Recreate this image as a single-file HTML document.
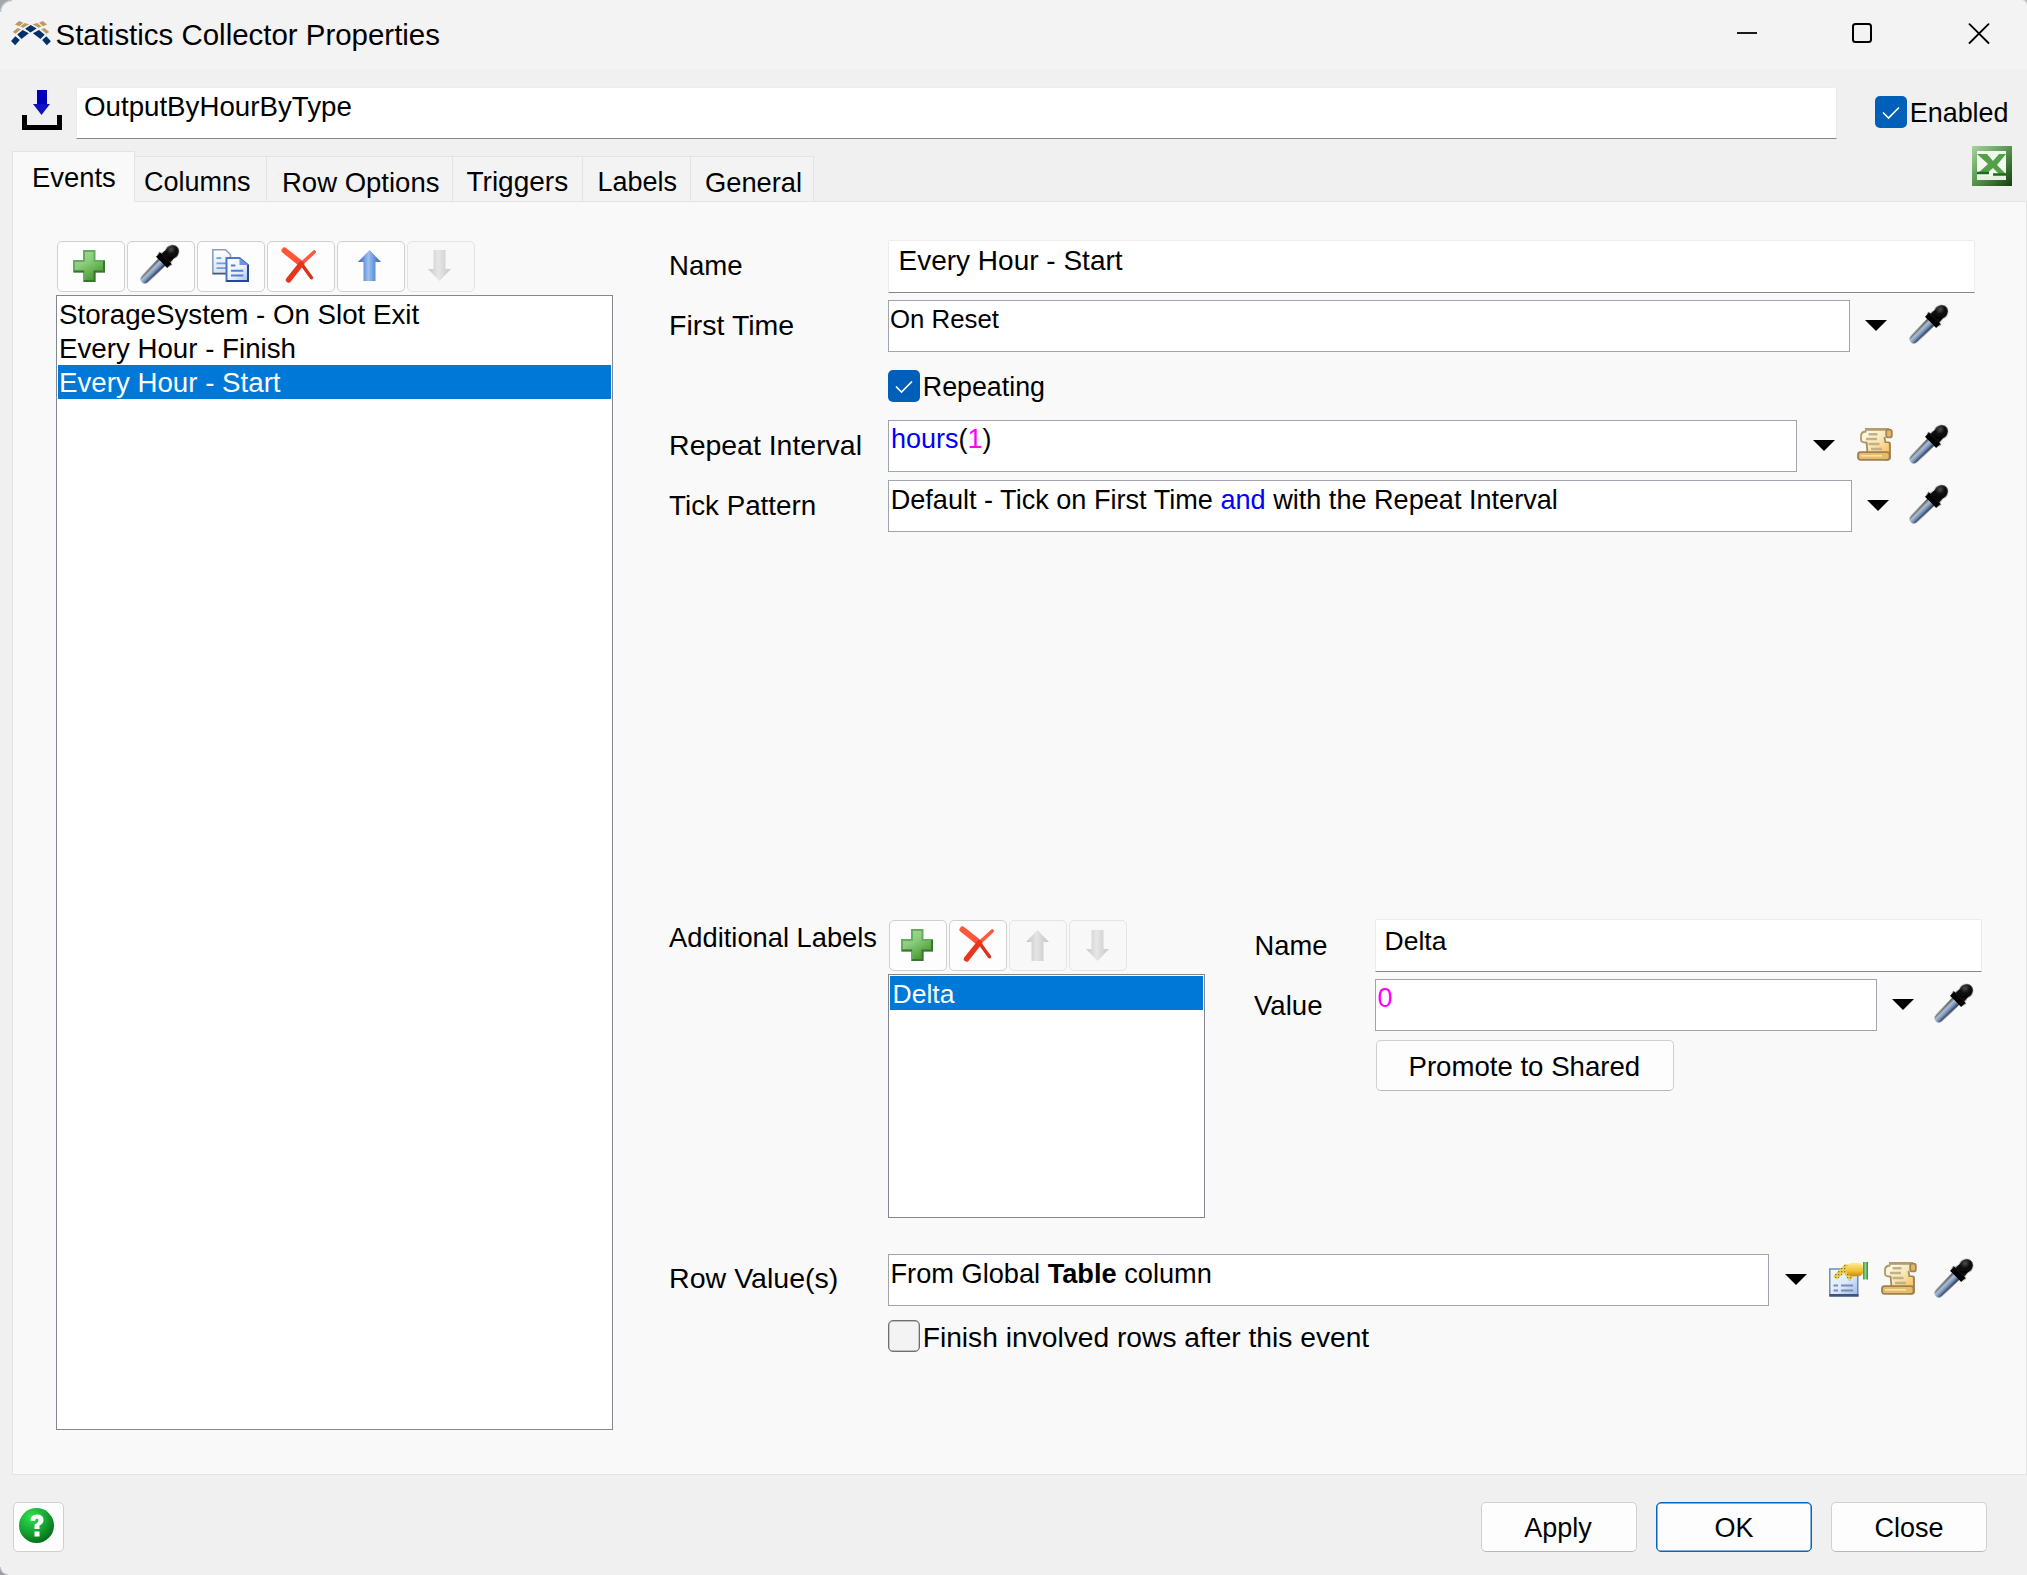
<!DOCTYPE html>
<html><head><meta charset="utf-8"><title>Statistics Collector Properties</title>
<style>
html,body{margin:0;padding:0;}
body{width:2027px;height:1575px;position:relative;overflow:hidden;background:#f0f0f0;font-family:"Liberation Sans", sans-serif;}
</style></head><body>
<div style="position:absolute;left:0px;top:0px;width:2027px;height:69px;background:#f3f3f3"></div>
<div style="position:absolute;left:0;top:0;width:12px;height:12px;background:radial-gradient(circle at 12px 12px, rgba(0,0,0,0) 10px, #a4a8ac 12.5px)"></div>
<div style="position:absolute;left:0;top:1567px;width:8px;height:8px;background:radial-gradient(circle at 8px 0px, rgba(0,0,0,0) 6.5px, #9a9ea2 8.5px)"></div>
<div style="position:absolute;left:2021px;top:0;width:6px;height:6px;background:radial-gradient(circle at 0px 6px, rgba(0,0,0,0) 5.5px, #c0c0c0 7px)"></div>
<svg style="position:absolute;left:8px;top:16px" width="48" height="34" viewBox="0 0 48 34"><defs><filter id="lb" x="-10%" y="-10%" width="120%" height="120%"><feGaussianBlur stdDeviation="0.45"/></filter></defs><g filter="url(#lb)"><polygon points="17.05,12.79 22.73,9.00 28.65,12.55 22.50,16.58" fill="#04306a"/><polygon points="9.24,18.47 14.68,13.97 20.84,17.29 13.50,22.97" fill="#04306a"/><polygon points="3.08,25.10 7.34,20.13 11.84,23.92 7.10,29.36" fill="#04306a"/><polygon points="24.86,17.29 31.02,13.97 36.70,18.71 32.44,22.97" fill="#04306a"/><polygon points="34.10,23.92 38.36,20.13 42.86,25.34 38.83,29.36" fill="#04306a"/><polygon points="6.87,8.52 11.13,4.97 15.39,6.87 11.37,10.18" fill="#bd9a64"/><polygon points="12.31,10.42 16.58,7.10 21.08,8.29 15.39,11.84" fill="#bd9a64"/><polygon points="4.74,16.10 9.47,12.08 13.02,13.26 7.58,17.76" fill="#bd9a64"/><polygon points="31.02,6.87 34.81,4.97 39.07,8.52 35.05,10.18" fill="#bd9a64"/><polygon points="24.63,8.29 29.36,7.10 33.63,10.42 30.55,11.84" fill="#bd9a64"/><polygon points="33.15,13.26 36.47,12.08 41.20,16.10 38.36,17.76" fill="#bd9a64"/></g></svg>
<div style="position:absolute;left:55.50px;top:19.66px;font-size:29.45px;line-height:29.45px;color:#000;white-space:nowrap;">Statistics Collector Properties</div>
<div style="position:absolute;left:1737px;top:32px;width:20px;height:2px;background:#1a1a1a"></div>
<svg style="position:absolute;left:1850px;top:21px" width="24" height="24" viewBox="0 0 24 24"><rect x="3" y="3" width="18" height="18" rx="2.5" fill="none" stroke="#000" stroke-width="2"/></svg>
<svg style="position:absolute;left:1968px;top:23px" width="22" height="21" viewBox="0 0 22 21"><path d="M1.5,1.2 L20.5,20 M20.5,1.2 L1.5,20" stroke="#000" stroke-width="1.8" stroke-linecap="round"/></svg>
<div style="position:absolute;left:37px;top:90px;width:10px;height:16px;background:#0000b8"></div>
<svg style="position:absolute;left:33px;top:104px" width="17" height="12" viewBox="0 0 17 12"><path d="M0,0 H17 L8.5,11 Z" fill="#1010c0"/></svg>
<div style="position:absolute;left:22px;top:115px;width:40px;height:15px;background:#000"></div>
<div style="position:absolute;left:27px;top:115px;width:30px;height:10px;background:#f0f0f0"></div>
<div style="position:absolute;left:76px;top:87px;width:1759px;height:50px;background:#fff;border:1px solid #ececec;border-bottom:1px solid #868686;border-radius:2px 2px 0 0"></div>
<div style="position:absolute;left:84.00px;top:92.85px;font-size:27.7px;line-height:27.7px;color:#000;white-space:nowrap;">OutputByHourByType</div>
<div style="position:absolute;left:1875px;top:96px;width:32px;height:32px;background:#005fb8;border-radius:5px"></div>
<svg style="position:absolute;left:1875px;top:96px" width="32" height="32" viewBox="0 0 32 32"><path d="M8,16.5 L13.5,22 L24,11.5" stroke="#fff" stroke-width="1.6" fill="none"/></svg>
<div style="position:absolute;left:1909.80px;top:99.92px;font-size:26.9px;line-height:26.9px;color:#000;white-space:nowrap;">Enabled</div>
<svg style="position:absolute;left:1972px;top:146px" width="40" height="40" viewBox="0 0 40 40"><defs><linearGradient id="exg" x1="0" y1="0" x2="1" y2="1"><stop offset="0" stop-color="#a8d4a0"/><stop offset="0.45" stop-color="#5c9c54"/><stop offset="1" stop-color="#173e12"/></linearGradient>
<filter id="xf" x="-10%" y="-10%" width="120%" height="120%"><feGaussianBlur stdDeviation="0.55"/></filter></defs>
<rect x="0" y="0" width="40" height="40" fill="url(#exg)"/>
<g filter="url(#xf)">
<rect x="5" y="5" width="29" height="29" fill="#f2f8f0"/>
<path d="M5,8 H15 L21,15 L27,8 H34 L25,19 L34,28 H27 L21,22 L14,28 H5 L16,18 Z" fill="#52a048"/>
<path d="M5,27 H17 M21,28.5 H34" stroke="#1f6a1c" stroke-width="2.4"/>
<rect x="5" y="30" width="29" height="4" fill="#e4f0e2"/>
</g></svg>
<div style="position:absolute;left:12px;top:201px;width:2015px;height:1274px;background:#f9f9f9;border:1px solid #e3e3e3;box-sizing:border-box"></div>
<div style="position:absolute;left:135px;top:156px;width:131px;height:44px;background:#f3f3f3;border:1px solid #e3e3e3;border-left:none;border-bottom:none"></div>
<div style="position:absolute;left:144.00px;top:169.14px;font-size:27px;line-height:27px;color:#000;white-space:nowrap;">Columns</div>
<div style="position:absolute;left:267px;top:156px;width:185px;height:44px;background:#f3f3f3;border:1px solid #e3e3e3;border-left:none;border-bottom:none"></div>
<div style="position:absolute;left:282.00px;top:168.72px;font-size:27.5px;line-height:27.5px;color:#000;white-space:nowrap;">Row Options</div>
<div style="position:absolute;left:453px;top:156px;width:129px;height:44px;background:#f3f3f3;border:1px solid #e3e3e3;border-left:none;border-bottom:none"></div>
<div style="position:absolute;left:466.50px;top:168.29px;font-size:28px;line-height:28px;color:#000;white-space:nowrap;">Triggers</div>
<div style="position:absolute;left:583px;top:156px;width:107px;height:44px;background:#f3f3f3;border:1px solid #e3e3e3;border-left:none;border-bottom:none"></div>
<div style="position:absolute;left:597.50px;top:169.14px;font-size:27px;line-height:27px;color:#000;white-space:nowrap;">Labels</div>
<div style="position:absolute;left:691px;top:156px;width:122px;height:44px;background:#f3f3f3;border:1px solid #e3e3e3;border-left:none;border-bottom:none"></div>
<div style="position:absolute;left:705.00px;top:168.89px;font-size:27.3px;line-height:27.3px;color:#000;white-space:nowrap;">General</div>
<div style="position:absolute;left:12px;top:151px;width:121px;height:50px;background:#f9f9f9;border:1px solid #e3e3e3;border-bottom:none"></div>
<div style="position:absolute;left:13px;top:200px;width:120px;height:3px;background:#f9f9f9"></div>
<div style="position:absolute;left:32.00px;top:163.80px;font-size:27.4px;line-height:27.4px;color:#000;white-space:nowrap;">Events</div>
<div style="position:absolute;left:57px;top:241px;width:66px;height:49px;background:#fdfdfd;border:1px solid #d0d0d0;border-radius:5px"></div>
<div style="position:absolute;left:127px;top:241px;width:66px;height:49px;background:#fdfdfd;border:1px solid #d0d0d0;border-radius:5px"></div>
<div style="position:absolute;left:197px;top:241px;width:66px;height:49px;background:#fdfdfd;border:1px solid #d0d0d0;border-radius:5px"></div>
<div style="position:absolute;left:267px;top:241px;width:66px;height:49px;background:#fdfdfd;border:1px solid #d0d0d0;border-radius:5px"></div>
<div style="position:absolute;left:337px;top:241px;width:66px;height:49px;background:#fdfdfd;border:1px solid #d0d0d0;border-radius:5px"></div>
<div style="position:absolute;left:407px;top:241px;width:66px;height:49px;background:#f8f8f8;border:1px solid #e4e4e4;border-radius:5px"></div>
<svg style="position:absolute;left:73px;top:250px" width="32" height="32" viewBox="0 0 32 32"><defs><linearGradient id="plg" x1="0" y1="0" x2="0.6" y2="1"><stop offset="0" stop-color="#a8dc98"/><stop offset="0.45" stop-color="#8ccc7c"/><stop offset="1" stop-color="#46982c"/></linearGradient>
<filter id="pb" x="-10%" y="-10%" width="120%" height="120%"><feGaussianBlur stdDeviation="0.6"/></filter></defs>
<g filter="url(#pb)">
<path d="M11,1 H21.5 V11 H31 V21.5 H21.5 V31 H11 V21.5 H1 V11 H11 Z" fill="url(#plg)" stroke="#64ae5c" stroke-width="2"/>
<path d="M31,11 V21.5 H21.5 V31 H11 M1,21.5 H11" fill="none" stroke="#2f6a2a" stroke-width="2" opacity="0.85"/>
</g></svg>
<svg style="position:absolute;left:137px;top:242px" width="45" height="45" viewBox="0 0 45 45"><defs><linearGradient id="tubeg" x1="0" x2="1" y1="0" y2="0">
<stop offset="0" stop-color="#30343a"/><stop offset="0.32" stop-color="#b4c0cc"/><stop offset="0.62" stop-color="#7494c4"/><stop offset="1" stop-color="#202428"/></linearGradient>
<radialGradient id="bulbg" cx="0.3" cy="0.4" r="0.75"><stop offset="0" stop-color="#505050"/><stop offset="0.45" stop-color="#101010"/><stop offset="1" stop-color="#000"/></radialGradient>
<filter id="eb" x="-20%" y="-20%" width="140%" height="140%"><feGaussianBlur stdDeviation="0.65"/></filter></defs>
<g transform="translate(22.5,22.5) rotate(45)" filter="url(#eb)">
<path d="M-5,-4 L5,-4 L4.2,20.5 Q4,25 0,25 Q-4,25 -4.2,20.5 Z" fill="url(#tubeg)"/>
<path d="M-8.6,-9 L8.6,-9 L7.8,-3 L-7.8,-3 Z" fill="#060606"/>
<path d="M-6,-14 L6,-14 L6.5,-8 L-6.5,-8 Z" fill="#0a0a0a"/>
<ellipse cx="0" cy="-17.5" rx="6.6" ry="7.4" fill="url(#bulbg)"/>
</g></svg>
<svg style="position:absolute;left:200px;top:242px" width="60" height="48" viewBox="0 0 60 48"><defs><linearGradient id="cpg1" x1="0" y1="0" x2="0" y2="1"><stop offset="0" stop-color="#ffffff"/><stop offset="1" stop-color="#d8e2f0"/></linearGradient>
<linearGradient id="cpg2" x1="0" y1="0" x2="1" y2="1"><stop offset="0" stop-color="#ffffff"/><stop offset="0.6" stop-color="#e8eef8"/><stop offset="1" stop-color="#a8bce0"/></linearGradient>
<filter id="cb" x="-10%" y="-10%" width="120%" height="120%"><feGaussianBlur stdDeviation="0.6"/></filter></defs>
<g filter="url(#cb)">
<path d="M12.8,7.8 H25.5 L30.5,12.8 V31.8 H12.8 Z" fill="url(#cpg1)" stroke="#8aa0bc" stroke-width="1.6"/>
<path d="M12.8,31.5 H30" stroke="#4a5a70" stroke-width="1.6"/>
<path d="M16.5,16.2 H21.3 M16.5,21.3 H26 M16.5,26.2 H26" stroke="#6a9ee6" stroke-width="1.8"/>
<path d="M26.5,16 H39.5 L48,23 V39 H26.5 Z" fill="url(#cpg2)" stroke="#4a74cc" stroke-width="2"/>
<path d="M26.5,39 H48 V23" fill="none" stroke="#26479c" stroke-width="2"/>
<path d="M39.5,16 V23 H48 Z" fill="#6e94e0"/>
<path d="M31,23.5 H35.4 M31,28.7 H43.3 M31,33.5 H43.3" stroke="#4a80d8" stroke-width="2"/>
</g></svg>
<svg style="position:absolute;left:280px;top:245px" width="38" height="38" viewBox="0 0 38 38"><defs><filter id="xb" x="-20%" y="-20%" width="140%" height="140%"><feGaussianBlur stdDeviation="0.5"/></filter></defs>
<g filter="url(#xb)" stroke-linecap="round" fill="none">
<path d="M4.5,5.5 L21.3,18.8" stroke="#ff5538" stroke-width="6"/>
<path d="M21.3,18.8 L31.5,32.8" stroke="#d8301a" stroke-width="3.4"/>
<path d="M34.2,7.0 L21.3,18.8" stroke="#ff5a40" stroke-width="3.6"/>
<path d="M21.3,18.8 L8.5,35.0" stroke="#e8361c" stroke-width="5.4"/>
</g></svg>
<svg style="position:absolute;left:358px;top:250px" width="23" height="31" viewBox="0 0 23 31"><defs><linearGradient id="ua0" x1="0" x2="1"><stop offset="0" stop-color="#2d5fc0"/><stop offset="0.45" stop-color="#9cc0f0"/><stop offset="1" stop-color="#2d5fc0"/></linearGradient></defs>
<path d="M11.5,0 L23,12 L17.5,12 L17.5,31 L5.5,31 L5.5,12 L0,12 Z" fill="url(#ua0)"/></svg>
<svg style="position:absolute;left:428px;top:250px" width="23" height="31" viewBox="0 0 23 31"><defs><linearGradient id="da1" x1="0" x2="1"><stop offset="0" stop-color="#c8c8c8"/><stop offset="0.45" stop-color="#e6e6e6"/><stop offset="1" stop-color="#c8c8c8"/></linearGradient></defs>
<path d="M5.5,0 L17.5,0 L17.5,19 L23,19 L11.5,31 L0,19 L5.5,19 Z" fill="url(#da1)"/></svg>
<div style="position:absolute;left:56px;top:295px;width:557px;height:1135px;background:#fff;border:1px solid #828790;box-sizing:border-box"></div>
<div style="position:absolute;left:58px;top:365px;width:553px;height:34px;background:#0078d7"></div>
<div style="position:absolute;left:59.00px;top:301.25px;font-size:27.7px;line-height:27.7px;color:#000;white-space:nowrap;">StorageSystem - On Slot Exit</div>
<div style="position:absolute;left:59.00px;top:334.95px;font-size:27.7px;line-height:27.7px;color:#000;white-space:nowrap;">Every Hour - Finish</div>
<div style="position:absolute;left:59.00px;top:369.25px;font-size:27.7px;line-height:27.7px;color:#fff;white-space:nowrap;">Every Hour - Start</div>
<div style="position:absolute;left:669.10px;top:252.13px;font-size:27.6px;line-height:27.6px;color:#000;white-space:nowrap;">Name</div>
<div style="position:absolute;left:669.10px;top:310.57px;font-size:28.5px;line-height:28.5px;color:#000;white-space:nowrap;">First Time</div>
<div style="position:absolute;left:669.10px;top:430.91px;font-size:28.45px;line-height:28.45px;color:#000;white-space:nowrap;">Repeat Interval</div>
<div style="position:absolute;left:669.10px;top:491.50px;font-size:27.75px;line-height:27.75px;color:#000;white-space:nowrap;">Tick Pattern</div>
<div style="position:absolute;left:669.10px;top:923.89px;font-size:27.3px;line-height:27.3px;color:#000;white-space:nowrap;">Additional Labels</div>
<div style="position:absolute;left:669.10px;top:1264.33px;font-size:28.55px;line-height:28.55px;color:#000;white-space:nowrap;">Row Value(s)</div>
<div style="position:absolute;left:888px;top:240px;width:1085px;height:51px;background:#fff;border:1px solid #ececec;border-bottom:1px solid #868686;border-radius:2px 2px 0 0"></div>
<div style="position:absolute;left:898.50px;top:247.29px;font-size:28px;line-height:28px;color:#000;white-space:nowrap;">Every Hour - Start</div>
<div style="position:absolute;left:888px;top:300px;width:960px;height:50px;background:#fff;border:1px solid #a0a4ac"></div>
<div style="position:absolute;left:890.00px;top:307.16px;font-size:25.8px;line-height:25.8px;color:#000;white-space:nowrap;">On Reset</div>
<svg style="position:absolute;left:1865px;top:320px" width="22" height="11" viewBox="0 0 22 11"><path d="M0,0 L22,0 L11.0,11 Z" fill="#000"/></svg>
<svg style="position:absolute;left:1906px;top:302px" width="45" height="45" viewBox="0 0 45 45"><defs><linearGradient id="tubeg" x1="0" x2="1" y1="0" y2="0">
<stop offset="0" stop-color="#30343a"/><stop offset="0.32" stop-color="#b4c0cc"/><stop offset="0.62" stop-color="#7494c4"/><stop offset="1" stop-color="#202428"/></linearGradient>
<radialGradient id="bulbg" cx="0.3" cy="0.4" r="0.75"><stop offset="0" stop-color="#505050"/><stop offset="0.45" stop-color="#101010"/><stop offset="1" stop-color="#000"/></radialGradient>
<filter id="eb" x="-20%" y="-20%" width="140%" height="140%"><feGaussianBlur stdDeviation="0.65"/></filter></defs>
<g transform="translate(22.5,22.5) rotate(45)" filter="url(#eb)">
<path d="M-5,-4 L5,-4 L4.2,20.5 Q4,25 0,25 Q-4,25 -4.2,20.5 Z" fill="url(#tubeg)"/>
<path d="M-8.6,-9 L8.6,-9 L7.8,-3 L-7.8,-3 Z" fill="#060606"/>
<path d="M-6,-14 L6,-14 L6.5,-8 L-6.5,-8 Z" fill="#0a0a0a"/>
<ellipse cx="0" cy="-17.5" rx="6.6" ry="7.4" fill="url(#bulbg)"/>
</g></svg>
<div style="position:absolute;left:888px;top:370px;width:32px;height:32px;background:#005fb8;border-radius:5px"></div>
<svg style="position:absolute;left:888px;top:370px" width="32" height="32" viewBox="0 0 32 32"><path d="M8,16.5 L13.5,22 L24,11.5" stroke="#fff" stroke-width="1.6" fill="none"/></svg>
<div style="position:absolute;left:922.80px;top:374.31px;font-size:26.8px;line-height:26.8px;color:#000;white-space:nowrap;">Repeating</div>
<div style="position:absolute;left:888px;top:420px;width:907px;height:50px;background:#fff;border:1px solid #a0a4ac"></div>
<div style="position:absolute;left:891.00px;top:425.84px;font-size:27px;line-height:27px;color:#000;white-space:nowrap;"><span style="color:#0000ff">hours</span>(<span style="color:#ff00ff">1</span>)</div>
<svg style="position:absolute;left:1813px;top:440px" width="22" height="11" viewBox="0 0 22 11"><path d="M0,0 L22,0 L11.0,11 Z" fill="#000"/></svg>
<svg style="position:absolute;left:1855px;top:424px" width="41" height="40" viewBox="0 0 41 40"><defs><linearGradient id="scg" x1="0" y1="0" x2="1" y2="1"><stop offset="0" stop-color="#fffef6"/><stop offset="0.5" stop-color="#f6e8bc"/><stop offset="1" stop-color="#f8c060"/></linearGradient>
<filter id="sb" x="-10%" y="-10%" width="120%" height="120%"><feGaussianBlur stdDeviation="0.6"/></filter></defs>
<g filter="url(#sb)" transform="translate(3,3)">
<rect x="26.5" y="15.5" width="5.5" height="17" rx="1.5" fill="#eebc60" stroke="#9c8050" stroke-width="1.8"/>
<path d="M6,4 H27.5 V10 H26.5 L27.5,16 H30.5 V26 H9.5 L8.5,15 H4 V5 Z" fill="url(#scg)"/>
<path d="M7,2.4 H31" stroke="#b69c6a" stroke-width="2.8"/>
<rect x="28.2" y="2.6" width="5.6" height="7.8" rx="2" fill="#e2b868" stroke="#a48656" stroke-width="1.8"/>
<path d="M8.5,4.5 Q3,4.5 3,9 L3,13 Q3,15.5 8.5,15.5" fill="#faf4dc" stroke="#b09868" stroke-width="1.8"/>
<path d="M26.5,10 L27.5,16 M9.5,26 L8.5,15" stroke="#a88a58" stroke-width="1.8" fill="none"/>
<path d="M10.5,7.3 H19.5 M8,12 H19 M10.5,17 H21.5 M13,22 H24" stroke="#c4b080" stroke-width="2.4"/>
<rect x="0" y="25.2" width="31.5" height="7.6" rx="2.5" fill="#e6bc6c" stroke="#a08050" stroke-width="1.8"/>
<path d="M3,28.8 H24" stroke="#f8e4a8" stroke-width="1.6"/>
</g></svg>
<svg style="position:absolute;left:1906px;top:422px" width="45" height="45" viewBox="0 0 45 45"><defs><linearGradient id="tubeg" x1="0" x2="1" y1="0" y2="0">
<stop offset="0" stop-color="#30343a"/><stop offset="0.32" stop-color="#b4c0cc"/><stop offset="0.62" stop-color="#7494c4"/><stop offset="1" stop-color="#202428"/></linearGradient>
<radialGradient id="bulbg" cx="0.3" cy="0.4" r="0.75"><stop offset="0" stop-color="#505050"/><stop offset="0.45" stop-color="#101010"/><stop offset="1" stop-color="#000"/></radialGradient>
<filter id="eb" x="-20%" y="-20%" width="140%" height="140%"><feGaussianBlur stdDeviation="0.65"/></filter></defs>
<g transform="translate(22.5,22.5) rotate(45)" filter="url(#eb)">
<path d="M-5,-4 L5,-4 L4.2,20.5 Q4,25 0,25 Q-4,25 -4.2,20.5 Z" fill="url(#tubeg)"/>
<path d="M-8.6,-9 L8.6,-9 L7.8,-3 L-7.8,-3 Z" fill="#060606"/>
<path d="M-6,-14 L6,-14 L6.5,-8 L-6.5,-8 Z" fill="#0a0a0a"/>
<ellipse cx="0" cy="-17.5" rx="6.6" ry="7.4" fill="url(#bulbg)"/>
</g></svg>
<div style="position:absolute;left:888px;top:480px;width:962px;height:50px;background:#fff;border:1px solid #a0a4ac"></div>
<div style="position:absolute;left:890.70px;top:486.05px;font-size:27.1px;line-height:27.1px;color:#000;white-space:nowrap;">Default - Tick on First Time <span style="color:#0000ff">and</span> with the Repeat Interval</div>
<svg style="position:absolute;left:1867px;top:500px" width="22" height="11" viewBox="0 0 22 11"><path d="M0,0 L22,0 L11.0,11 Z" fill="#000"/></svg>
<svg style="position:absolute;left:1906px;top:482px" width="45" height="45" viewBox="0 0 45 45"><defs><linearGradient id="tubeg" x1="0" x2="1" y1="0" y2="0">
<stop offset="0" stop-color="#30343a"/><stop offset="0.32" stop-color="#b4c0cc"/><stop offset="0.62" stop-color="#7494c4"/><stop offset="1" stop-color="#202428"/></linearGradient>
<radialGradient id="bulbg" cx="0.3" cy="0.4" r="0.75"><stop offset="0" stop-color="#505050"/><stop offset="0.45" stop-color="#101010"/><stop offset="1" stop-color="#000"/></radialGradient>
<filter id="eb" x="-20%" y="-20%" width="140%" height="140%"><feGaussianBlur stdDeviation="0.65"/></filter></defs>
<g transform="translate(22.5,22.5) rotate(45)" filter="url(#eb)">
<path d="M-5,-4 L5,-4 L4.2,20.5 Q4,25 0,25 Q-4,25 -4.2,20.5 Z" fill="url(#tubeg)"/>
<path d="M-8.6,-9 L8.6,-9 L7.8,-3 L-7.8,-3 Z" fill="#060606"/>
<path d="M-6,-14 L6,-14 L6.5,-8 L-6.5,-8 Z" fill="#0a0a0a"/>
<ellipse cx="0" cy="-17.5" rx="6.6" ry="7.4" fill="url(#bulbg)"/>
</g></svg>
<div style="position:absolute;left:889px;top:920px;width:56px;height:49px;background:#fdfdfd;border:1px solid #d0d0d0;border-radius:5px"></div>
<div style="position:absolute;left:949px;top:920px;width:56px;height:49px;background:#fdfdfd;border:1px solid #d0d0d0;border-radius:5px"></div>
<div style="position:absolute;left:1009px;top:920px;width:56px;height:49px;background:#f8f8f8;border:1px solid #e4e4e4;border-radius:5px"></div>
<div style="position:absolute;left:1069px;top:920px;width:56px;height:49px;background:#f8f8f8;border:1px solid #e4e4e4;border-radius:5px"></div>
<svg style="position:absolute;left:901px;top:929px" width="32" height="32" viewBox="0 0 32 32"><defs><linearGradient id="plg" x1="0" y1="0" x2="0.6" y2="1"><stop offset="0" stop-color="#a8dc98"/><stop offset="0.45" stop-color="#8ccc7c"/><stop offset="1" stop-color="#46982c"/></linearGradient>
<filter id="pb" x="-10%" y="-10%" width="120%" height="120%"><feGaussianBlur stdDeviation="0.6"/></filter></defs>
<g filter="url(#pb)">
<path d="M11,1 H21.5 V11 H31 V21.5 H21.5 V31 H11 V21.5 H1 V11 H11 Z" fill="url(#plg)" stroke="#64ae5c" stroke-width="2"/>
<path d="M31,11 V21.5 H21.5 V31 H11 M1,21.5 H11" fill="none" stroke="#2f6a2a" stroke-width="2" opacity="0.85"/>
</g></svg>
<svg style="position:absolute;left:958px;top:924px" width="38" height="38" viewBox="0 0 38 38"><defs><filter id="xb" x="-20%" y="-20%" width="140%" height="140%"><feGaussianBlur stdDeviation="0.5"/></filter></defs>
<g filter="url(#xb)" stroke-linecap="round" fill="none">
<path d="M4.5,5.5 L21.3,18.8" stroke="#ff5538" stroke-width="6"/>
<path d="M21.3,18.8 L31.5,32.8" stroke="#d8301a" stroke-width="3.4"/>
<path d="M34.2,7.0 L21.3,18.8" stroke="#ff5a40" stroke-width="3.6"/>
<path d="M21.3,18.8 L8.5,35.0" stroke="#e8361c" stroke-width="5.4"/>
</g></svg>
<svg style="position:absolute;left:1026px;top:930px" width="23" height="31" viewBox="0 0 23 31"><defs><linearGradient id="ua1" x1="0" x2="1"><stop offset="0" stop-color="#c4c4c4"/><stop offset="0.45" stop-color="#e4e4e4"/><stop offset="1" stop-color="#c4c4c4"/></linearGradient></defs>
<path d="M11.5,0 L23,12 L17.5,12 L17.5,31 L5.5,31 L5.5,12 L0,12 Z" fill="url(#ua1)"/></svg>
<svg style="position:absolute;left:1086px;top:930px" width="23" height="31" viewBox="0 0 23 31"><defs><linearGradient id="da1" x1="0" x2="1"><stop offset="0" stop-color="#c8c8c8"/><stop offset="0.45" stop-color="#e6e6e6"/><stop offset="1" stop-color="#c8c8c8"/></linearGradient></defs>
<path d="M5.5,0 L17.5,0 L17.5,19 L23,19 L11.5,31 L0,19 L5.5,19 Z" fill="url(#da1)"/></svg>
<div style="position:absolute;left:888px;top:974px;width:317px;height:244px;background:#fff;border:1px solid #828790;box-sizing:border-box"></div>
<div style="position:absolute;left:890px;top:976px;width:313px;height:34px;background:#0078d7"></div>
<div style="position:absolute;left:892.50px;top:981.06px;font-size:26.5px;line-height:26.5px;color:#fff;white-space:nowrap;">Delta</div>
<div style="position:absolute;left:1254.50px;top:931.89px;font-size:27.3px;line-height:27.3px;color:#000;white-space:nowrap;">Name</div>
<div style="position:absolute;left:1254.00px;top:991.63px;font-size:27.6px;line-height:27.6px;color:#000;white-space:nowrap;">Value</div>
<div style="position:absolute;left:1375px;top:919px;width:605px;height:51px;background:#fff;border:1px solid #ececec;border-bottom:1px solid #868686;border-radius:2px 2px 0 0"></div>
<div style="position:absolute;left:1384.50px;top:927.56px;font-size:26.5px;line-height:26.5px;color:#000;white-space:nowrap;">Delta</div>
<div style="position:absolute;left:1375px;top:979px;width:500px;height:50px;background:#fff;border:1px solid #a0a4ac"></div>
<div style="position:absolute;left:1377.50px;top:985.14px;font-size:27px;line-height:27px;color:#ff00ff;white-space:nowrap;">0</div>
<svg style="position:absolute;left:1892px;top:999px" width="22" height="11" viewBox="0 0 22 11"><path d="M0,0 L22,0 L11.0,11 Z" fill="#000"/></svg>
<svg style="position:absolute;left:1931px;top:981px" width="45" height="45" viewBox="0 0 45 45"><defs><linearGradient id="tubeg" x1="0" x2="1" y1="0" y2="0">
<stop offset="0" stop-color="#30343a"/><stop offset="0.32" stop-color="#b4c0cc"/><stop offset="0.62" stop-color="#7494c4"/><stop offset="1" stop-color="#202428"/></linearGradient>
<radialGradient id="bulbg" cx="0.3" cy="0.4" r="0.75"><stop offset="0" stop-color="#505050"/><stop offset="0.45" stop-color="#101010"/><stop offset="1" stop-color="#000"/></radialGradient>
<filter id="eb" x="-20%" y="-20%" width="140%" height="140%"><feGaussianBlur stdDeviation="0.65"/></filter></defs>
<g transform="translate(22.5,22.5) rotate(45)" filter="url(#eb)">
<path d="M-5,-4 L5,-4 L4.2,20.5 Q4,25 0,25 Q-4,25 -4.2,20.5 Z" fill="url(#tubeg)"/>
<path d="M-8.6,-9 L8.6,-9 L7.8,-3 L-7.8,-3 Z" fill="#060606"/>
<path d="M-6,-14 L6,-14 L6.5,-8 L-6.5,-8 Z" fill="#0a0a0a"/>
<ellipse cx="0" cy="-17.5" rx="6.6" ry="7.4" fill="url(#bulbg)"/>
</g></svg>
<div style="position:absolute;left:1376px;top:1040px;width:296px;height:49px;background:#fdfdfd;border:1px solid #d0d0d0;border-bottom-color:#b8b8b8;border-radius:5px"></div>
<div style="position:absolute;left:1408.50px;top:1052.63px;font-size:27.6px;line-height:27.6px;color:#000;white-space:nowrap;">Promote to Shared</div>
<div style="position:absolute;left:888px;top:1254px;width:879px;height:50px;background:#fff;border:1px solid #a0a4ac"></div>
<div style="position:absolute;left:890.50px;top:1259.97px;font-size:27.2px;line-height:27.2px;color:#000;white-space:nowrap;">From Global <b>Table</b> column</div>
<svg style="position:absolute;left:1785px;top:1274px" width="22" height="11" viewBox="0 0 22 11"><path d="M0,0 L22,0 L11.0,11 Z" fill="#000"/></svg>
<svg style="position:absolute;left:1829px;top:1262px" width="40" height="35" viewBox="0 0 40 35"><defs><linearGradient id="tbg" x1="0" y1="0" x2="1" y2="1"><stop offset="0" stop-color="#f4fbfe"/><stop offset="0.55" stop-color="#dce8fa"/><stop offset="1" stop-color="#98b4ec"/></linearGradient>
<linearGradient id="ylg" x1="0" y1="0" x2="0" y2="1"><stop offset="0" stop-color="#fcec98"/><stop offset="0.6" stop-color="#f0c030"/><stop offset="1" stop-color="#c88a10"/></linearGradient>
<linearGradient id="gng" x1="0" y1="0" x2="1" y2="0"><stop offset="0" stop-color="#3a9a3a"/><stop offset="0.5" stop-color="#8ad08a"/><stop offset="1" stop-color="#2a8a2a"/></linearGradient>
<pattern id="chk" width="3" height="3" patternUnits="userSpaceOnUse"><rect width="3" height="3" fill="#ecd050"/><rect width="1.3" height="1.3" fill="#8a7030"/></pattern>
<filter id="tb" x="-10%" y="-10%" width="120%" height="120%"><feGaussianBlur stdDeviation="0.45"/></filter></defs>
<g filter="url(#tb)">
<rect x="0.8" y="7" width="28" height="27" fill="url(#tbg)" stroke="#6a84a8" stroke-width="1.4"/>
<rect x="0.5" y="32" width="29" height="2.5" fill="#3c5478"/>
<path d="M4.5,23.5 H9 M12,23.5 H24 M4.5,28.5 H9 M12,28.5 H24" stroke="#7a8cb0" stroke-width="1.8"/>
<path d="M4,14.5 L16,2 L23,4 L28,10 L20.5,19.5 L15,11 L8,17.5 Z" fill="url(#chk)" transform="rotate(0)"/>
<rect x="17" y="0.8" width="18" height="13.5" rx="6.5" fill="url(#ylg)"/>
<rect x="34" y="-0.5" width="5" height="18" fill="url(#gng)"/>
</g></svg>
<svg style="position:absolute;left:1879px;top:1258px" width="41" height="40" viewBox="0 0 41 40"><defs><linearGradient id="scg" x1="0" y1="0" x2="1" y2="1"><stop offset="0" stop-color="#fffef6"/><stop offset="0.5" stop-color="#f6e8bc"/><stop offset="1" stop-color="#f8c060"/></linearGradient>
<filter id="sb" x="-10%" y="-10%" width="120%" height="120%"><feGaussianBlur stdDeviation="0.6"/></filter></defs>
<g filter="url(#sb)" transform="translate(3,3)">
<rect x="26.5" y="15.5" width="5.5" height="17" rx="1.5" fill="#eebc60" stroke="#9c8050" stroke-width="1.8"/>
<path d="M6,4 H27.5 V10 H26.5 L27.5,16 H30.5 V26 H9.5 L8.5,15 H4 V5 Z" fill="url(#scg)"/>
<path d="M7,2.4 H31" stroke="#b69c6a" stroke-width="2.8"/>
<rect x="28.2" y="2.6" width="5.6" height="7.8" rx="2" fill="#e2b868" stroke="#a48656" stroke-width="1.8"/>
<path d="M8.5,4.5 Q3,4.5 3,9 L3,13 Q3,15.5 8.5,15.5" fill="#faf4dc" stroke="#b09868" stroke-width="1.8"/>
<path d="M26.5,10 L27.5,16 M9.5,26 L8.5,15" stroke="#a88a58" stroke-width="1.8" fill="none"/>
<path d="M10.5,7.3 H19.5 M8,12 H19 M10.5,17 H21.5 M13,22 H24" stroke="#c4b080" stroke-width="2.4"/>
<rect x="0" y="25.2" width="31.5" height="7.6" rx="2.5" fill="#e6bc6c" stroke="#a08050" stroke-width="1.8"/>
<path d="M3,28.8 H24" stroke="#f8e4a8" stroke-width="1.6"/>
</g></svg>
<svg style="position:absolute;left:1931px;top:1256px" width="45" height="45" viewBox="0 0 45 45"><defs><linearGradient id="tubeg" x1="0" x2="1" y1="0" y2="0">
<stop offset="0" stop-color="#30343a"/><stop offset="0.32" stop-color="#b4c0cc"/><stop offset="0.62" stop-color="#7494c4"/><stop offset="1" stop-color="#202428"/></linearGradient>
<radialGradient id="bulbg" cx="0.3" cy="0.4" r="0.75"><stop offset="0" stop-color="#505050"/><stop offset="0.45" stop-color="#101010"/><stop offset="1" stop-color="#000"/></radialGradient>
<filter id="eb" x="-20%" y="-20%" width="140%" height="140%"><feGaussianBlur stdDeviation="0.65"/></filter></defs>
<g transform="translate(22.5,22.5) rotate(45)" filter="url(#eb)">
<path d="M-5,-4 L5,-4 L4.2,20.5 Q4,25 0,25 Q-4,25 -4.2,20.5 Z" fill="url(#tubeg)"/>
<path d="M-8.6,-9 L8.6,-9 L7.8,-3 L-7.8,-3 Z" fill="#060606"/>
<path d="M-6,-14 L6,-14 L6.5,-8 L-6.5,-8 Z" fill="#0a0a0a"/>
<ellipse cx="0" cy="-17.5" rx="6.6" ry="7.4" fill="url(#bulbg)"/>
</g></svg>
<div style="position:absolute;left:888px;top:1320px;width:30px;height:30px;background:#f3f3f3;border:1px solid #6e6e6e;border-radius:5px;box-shadow:inset 0 0 0 0.4px #8a8a8a"></div>
<div style="position:absolute;left:922.70px;top:1322.72px;font-size:28.2px;line-height:28.2px;color:#000;white-space:nowrap;">Finish involved rows after this event</div>
<div style="position:absolute;left:13px;top:1502px;width:49px;height:48px;background:#fdfdfd;border:1px solid #d0d0d0;border-radius:5px"></div>
<svg style="position:absolute;left:19px;top:1508px" width="35" height="35" viewBox="0 0 35 35"><defs><radialGradient id="hg" cx="0.35" cy="0.25" r="0.8"><stop offset="0" stop-color="#30e050"/><stop offset="0.6" stop-color="#14a030"/><stop offset="1" stop-color="#066818"/></radialGradient></defs>
<circle cx="17.5" cy="17.5" r="17.5" fill="url(#hg)"/>
<path d="M11.5,12.5 Q11.5,6.5 18,6.5 Q24.5,6.5 24.5,12 Q24.5,15.5 20.5,17.5 L20.5,21 L15.5,21 L15.5,16.5 Q19.5,14.5 19.5,12 Q19.5,10.5 18,10.5 Q16,10.5 16,13 Z" fill="#fff"/>
<rect x="15.5" y="23.5" width="5" height="5" fill="#fff"/></svg>
<div style="position:absolute;left:1481px;top:1502px;width:154px;height:48px;background:#fdfdfd;border:1px solid #d0d0d0;border-bottom-color:#b8b8b8;border-radius:5px"></div>
<div style="position:absolute;left:1524.30px;top:1514.74px;font-size:27px;line-height:27px;color:#000;white-space:nowrap;">Apply</div>
<div style="position:absolute;left:1656px;top:1502px;width:154px;height:48px;background:#fdfdfd;border:1px solid #0067c0;border-radius:5px;box-shadow:inset 0 0 0 0.5px #0067c0"></div>
<div style="position:absolute;left:1714.50px;top:1514.74px;font-size:27px;line-height:27px;color:#000;white-space:nowrap;">OK</div>
<div style="position:absolute;left:1831px;top:1502px;width:154px;height:48px;background:#fdfdfd;border:1px solid #d0d0d0;border-bottom-color:#b8b8b8;border-radius:5px"></div>
<div style="position:absolute;left:1874.50px;top:1514.74px;font-size:27px;line-height:27px;color:#000;white-space:nowrap;">Close</div>
</body></html>
